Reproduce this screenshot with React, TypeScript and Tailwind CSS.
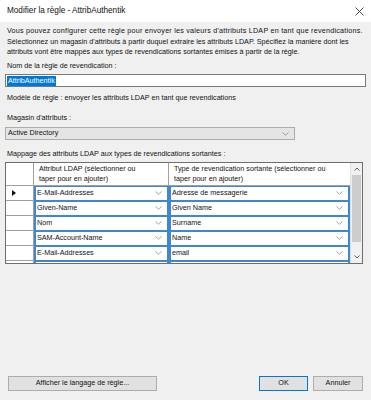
import React from 'react';

const ROWS = [
  { attr: 'E-Mail-Addresses', claim: 'Adresse de messagerie', current: true },
  { attr: 'Given-Name', claim: 'Given Name' },
  { attr: 'Nom', claim: 'Surname' },
  { attr: 'SAM-Account-Name', claim: 'Name' },
  { attr: 'E-Mail-Addresses', claim: 'email' },
];

function Chevron({ className = '' }: { className?: string }) {
  return (
    <svg width="7" height="4" viewBox="0 0 7 4" className={className}>
      <path d="M0.5 0.5 L3.5 3.2 L6.5 0.5" fill="none" stroke="#8a8a8a" strokeWidth="0.8" />
    </svg>
  );
}

function ComboCell({ text, width }: { text: string; width: string }) {
  return (
    <div className={`${width} h-[15px] flex items-center justify-between border-x-2 border-y border-[#3d88d0] bg-white pl-[1px] pr-[5px]`}>
      <span className="truncate">{text}</span>
      <Chevron />
    </div>
  );
}

export default function App() {
  return (
    <div className="w-[371px] h-[400px] bg-[#f0f0f0] flex flex-col text-[7.2px] leading-[10.5px] text-[#111] font-['Liberation_Sans',Arial,sans-serif]">
      {/* Title bar */}
      <div className="h-[22px] bg-white flex items-center justify-between pl-[7px] pr-[7px] shrink-0">
        <span className="text-[8.2px]">Modifier la règle - AttribAuthentik</span>
        <svg width="9" height="9" viewBox="0 0 9 9">
          <path d="M0.5 0.5 L8.5 8.5 M8.5 0.5 L0.5 8.5" stroke="#222" strokeWidth="0.8" />
        </svg>
      </div>

      <div className="flex flex-col px-[5px]">
        <p className="mt-[4px] pl-[2px] whitespace-nowrap">
          <span className="tracking-[0.22px]">
            Vous pouvez configurer cette règle pour envoyer les valeurs d'attributs LDAP en tant que revendications.
          </span>
          <br />
          Sélectionnez un magasin d'attributs à partir duquel extraire les attributs LDAP. Spécifiez la manière dont les
          <br />
          attributs vont être mappés aux types de revendications sortantes émises à partir de la règle.
        </p>

        <p className="mt-[3px] pl-[2px]">Nom de la règle de revendication :</p>
        <div className="mt-[3px] h-[13px] bg-white border border-[#7a7a7a] flex items-center pl-[1px]">
          <span className="bg-[#0078d7] text-white leading-[10px] px-[1px]">AttribAuthentik</span>
        </div>

        <p className="mt-[6px] pl-[2px]">Modèle de règle : envoyer les attributs LDAP en tant que revendications</p>

        <p className="mt-[9px] pl-[2px]">Magasin d'attributs :</p>
        <div className="mt-[4px] w-[290px] h-[13px] bg-[#e5e5e5] border border-[#acacac] flex items-center justify-between pl-[2px] pr-[5px]">
          <span>Active Directory</span>
          <Chevron />
        </div>

        <p className="mt-[9px] pl-[2px]">Mappage des attributs LDAP aux types de revendications sortantes :</p>

        {/* Grid */}
        <div className="mt-[2px] w-[358px] h-[102px] border border-[#6e6e6e] bg-[#f0f0f0] flex overflow-hidden">
          <div className="flex-1 flex flex-col">
            <div className="h-[23px] flex shrink-0 bg-white border-b border-[#a0a0a0]">
              <div className="w-[28px] border-r border-[#a0a0a0]" />
              <div className="w-[135px] border-r border-[#a0a0a0] pl-[5px] pt-[1px] leading-[10px]">
                Attribut LDAP (sélectionner ou
                <br />
                taper pour en ajouter)
              </div>
              <div className="flex-1 pl-[5px] pt-[1px] leading-[10px]">
                Type de revendication sortante (sélectionner ou
                <br />
                taper pour en ajouter)
              </div>
            </div>
            {ROWS.map((r, i) => (
              <div key={i} className="h-[15px] flex shrink-0">
                <div className="w-[28px] bg-white border-r border-b border-[#a0a0a0] flex items-center pl-[6px]">
                  {r.current && (
                    <svg width="4" height="6" viewBox="0 0 4 6">
                      <path d="M0 0 L4 3 L0 6 Z" fill="#111" />
                    </svg>
                  )}
                </div>
                <ComboCell text={r.attr} width="w-[135px]" />
                <ComboCell text={r.claim} width="flex-1" />
              </div>
            ))}
            <div className="h-[15px] flex shrink-0">
              <div className="w-[28px] bg-white border-r border-[#a0a0a0]" />
              <div className="w-[135px] border-x-2 border-t border-[#3d88d0] bg-white" />
              <div className="flex-1 border-x-2 border-t border-[#3d88d0] bg-white" />
            </div>
          </div>

          {/* Scrollbar */}
          <div className="w-[12px] flex flex-col items-center bg-[#f0f0f0] border-l border-[#e0e0e0]">
            <div className="h-[12px] flex items-center justify-center">
              <svg width="6" height="4" viewBox="0 0 6 4">
                <path d="M0.5 3.5 L3 1 L5.5 3.5" fill="none" stroke="#606060" strokeWidth="1" />
              </svg>
            </div>
            <div className="w-[9px] h-[67px] bg-[#cdcdcd]" />
            <div className="flex-1" />
            <div className="h-[12px] flex items-center justify-center">
              <svg width="6" height="4" viewBox="0 0 6 4">
                <path d="M0.5 0.5 L3 3 L5.5 0.5" fill="none" stroke="#606060" strokeWidth="1" />
              </svg>
            </div>
          </div>
        </div>

        {/* Buttons */}
        <div className="mt-[112px] flex items-center">
          <button className="ml-[3px] w-[149px] h-[15px] bg-[#e1e1e1] border border-[#adadad] text-[7.2px] leading-none">
            Afficher le langage de règle...
          </button>
          <div className="flex-1" />
          <button className="w-[49px] h-[15px] bg-[#e1e1e1] border border-[#0078d7] text-[7.2px] leading-none">
            OK
          </button>
          <button className="ml-[5px] mr-[3px] w-[50px] h-[15px] bg-[#e1e1e1] border border-[#adadad] text-[7.2px] leading-none">
            Annuler
          </button>
        </div>
      </div>
    </div>
  );
}
